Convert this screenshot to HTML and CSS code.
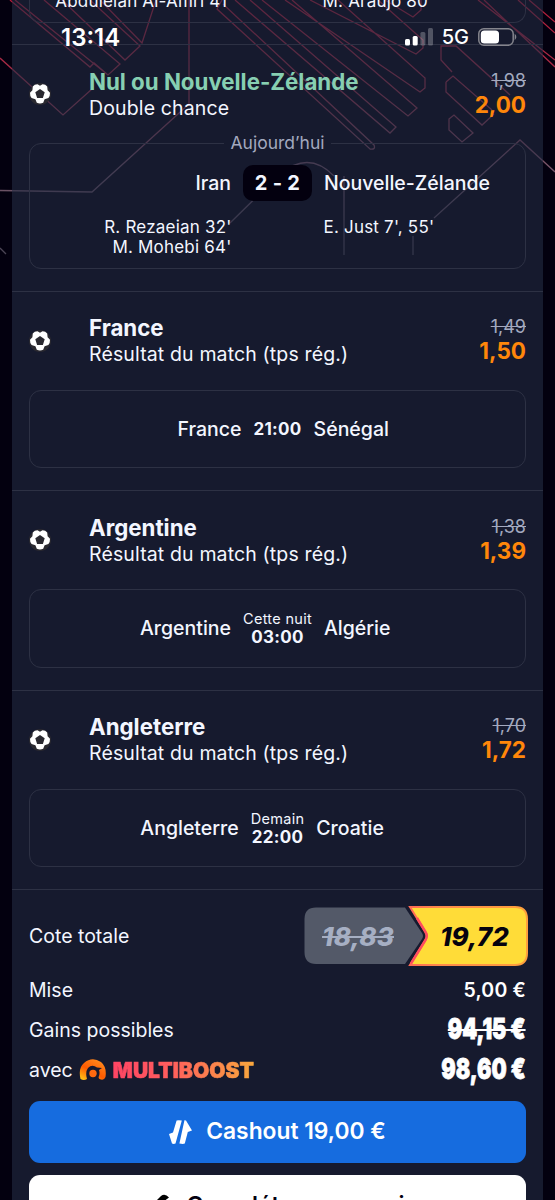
FILE: index.html
```html
<!DOCTYPE html>
<html lang="fr">
<head>
<meta charset="utf-8">
<title>Mes paris</title>
<link rel="stylesheet" href="styles.css">
</head>
<body>
<svg class="backdrop" width="555" height="300" viewBox="0 0 555 300">
  <defs>
    <linearGradient id="trace" gradientUnits="userSpaceOnUse" x1="0" y1="0" x2="0" y2="260">
      <stop offset="0" stop-color="#b51b38"/><stop offset=".35" stop-color="#a0304a"/><stop offset=".65" stop-color="#75566a"/><stop offset="1" stop-color="#484454"/>
    </linearGradient>
  </defs>
  <g fill="none" stroke="url(#trace)" stroke-width="1.300">
    <path d="M0 58 63 115 92 89M10 0 90 67 94 63 108 75 120 64 44 0M15 0 108 75M62 0 125 60 140 46 90 0M100 0 142 43 156 0M189 0V104L178 114 92 192 0 190.500M0 248 6 254"/>
    <path d="M222 0 217 9 370 149Q376 150 374 145L223 4M235 0 390 133 396 127 250 0M262 0 408 116 417 108 292 0M285 0 420 92 425 88V78L338 0M310 0 416 54 423 48V40L378 0M385 0 413 17 421 10V0"/>
    <path d="M510 95 456 46H441V60L452 72M446 82 453 76 492 110 M446 82V92L482 125 494 114M449 119 454 115 473 133 462 142 449 130ZM478 0 555 60M484 0 555 67M518 0 555 33M529 0 555 22M434 218 520 140 555 172M230 223 280 174Q309 150 334 176M344 176V255M413 236V255"/>
  </g>
</svg>
<svg width="0" height="0" class="sprite">
  <symbol id="ball" viewBox="0 0 22 22">
    <circle cx="11" cy="11" r="11" fill="#2a2930"/>
    <path fill="#fff" fill-rule="evenodd" d="M3.800 3.500Q5.500 1.300 8.500 1.200L11 2.800 13.500 1.200Q16.500 1.300 18.200 3.500L18.600 7.200 21 9.800Q21.200 13 19.400 15L15.600 16.200 14.200 19.800Q11 21.300 7.800 19.800L6.400 16.200 2.600 15Q.8 13 1 9.800L3.400 7.200ZM11 5.900 6.300 9.300 8.100 15H13.900L15.700 9.300Z"/>
  </symbol>
</svg>

<main class="slip">
  <div class="match match-cut">
    <div class="scorers"><p>Abdulelah Al-Amri 41'</p><p>M. Araujo 80'</p></div>
  </div>

  <section class="leg">
    <header class="pick">
      <svg class="ball"><use href="#ball"/></svg>
      <div class="names"><h2 class="won">Nul ou Nouvelle-Zélande</h2><p>Double chance</p></div>
      <div class="odds"><s>1,98</s><b>2,00</b></div>
    </header>
    <div class="match match-live">
      <span class="day"><span>Aujourd’hui</span></span>
      <div class="teams"><span class="home">Iran</span><b class="score">2 - 2</b><span>Nouvelle-Zélande</span></div>
      <div class="scorers"><p>R. Rezaeian 32'<br>M. Mohebi 64'</p><p>E. Just 7', 55'</p></div>
    </div>
  </section>

  <section class="leg">
    <header class="pick">
      <svg class="ball"><use href="#ball"/></svg>
      <div class="names"><h2>France</h2><p>Résultat du match (tps rég.)</p></div>
      <div class="odds"><s>1,49</s><b>1,50</b></div>
    </header>
    <div class="match teams upcoming"><span class="home">France</span><div class="when"><b>21:00</b></div><span>Sénégal</span></div>
  </section>

  <section class="leg">
    <header class="pick">
      <svg class="ball"><use href="#ball"/></svg>
      <div class="names"><h2>Argentine</h2><p>Résultat du match (tps rég.)</p></div>
      <div class="odds"><s>1,38</s><b>1,39</b></div>
    </header>
    <div class="match teams upcoming"><span class="home">Argentine</span><div class="when"><small>Cette nuit</small><b>03:00</b></div><span>Algérie</span></div>
  </section>

  <section class="leg">
    <header class="pick">
      <svg class="ball"><use href="#ball"/></svg>
      <div class="names"><h2>Angleterre</h2><p>Résultat du match (tps rég.)</p></div>
      <div class="odds"><s>1,70</s><b>1,72</b></div>
    </header>
    <div class="match teams upcoming"><span class="home">Angleterre</span><div class="when"><small>Demain</small><b>22:00</b></div><span>Croatie</span></div>
  </section>

  <section class="totals">
    <div class="row row-odds">
      <span>Cote totale</span>
      <div class="boost">
        <svg class="boost-shape" width="224" height="60" viewBox="0 0 224 60">
          <defs><linearGradient id="edge" x1="0" x2="1"><stop offset="0" stop-color="#ff6a55"/><stop offset=".25" stop-color="#ff8a4a"/><stop offset="1" stop-color="#ffa03c"/></linearGradient></defs>
          <path fill="#535968" d="M12 1.500H101L118 27Q120 30 118 33L101 58H12Q.5 58 .5 46V13Q.5 1.500 12 1.500Z"/>
          <path fill="#ffdc38" stroke="url(#edge)" stroke-width="2" d="M106 1H211Q223 1 223 13V47Q223 59 211 59H106L121.500 34Q124 30 121.500 26Z"/>
          <path fill="none" stroke="#ff4d5e" stroke-width="2.500" d="M113 12 121.500 26Q124 30 121.500 34L107 57.500"/>
        </svg>
        <s>18,83</s><b>19,72</b>
      </div>
    </div>
    <div class="row"><span>Mise</span><span class="stake">5,00 €</span></div>
    <div class="row"><span>Gains possibles</span><s class="gain">94,15 €</s></div>
    <div class="row"><span class="with">avec
      <svg class="boost-logo" width="28" height="22" viewBox="0 0 28 22">
        <defs><linearGradient id="flame" x1="0" y1="1" x2=".7" y2="0"><stop offset="0" stop-color="#ffd21a"/><stop offset=".5" stop-color="#ff5a00"/><stop offset="1" stop-color="#ff8a1c"/></linearGradient></defs>
        <path fill="url(#flame)" d="M1.500 20Q-1 9 5 4 13-3 22 3 28 8 26.500 18 25 22 20.500 20 19 19 20 17 21 14 20 11L23 9 18 8.500Q13 5 9 9 6 13 8 20 5 22 1.500 20Z"/>
        <circle cx="14" cy="14.500" r="3.700" fill="#ff6a10"/>
      </svg><strong class="brand">MULTIBOOST</strong></span><b class="gain">98,60 €</b></div>
  </section>

  <div class="actions">
    <button class="btn btn-primary">
      <svg width="23" height="24" viewBox="0 0 23 24" fill="#fff"><path d="M7.600.5Q8.500 0 12.800.4L6.500 23.600Q4.500 24.300 3 23.500L0 14 4 12.500Z"/><path d="M15.400.5Q14.600 0 17 .4L23 10.500 18.800 12 15.800 23.500Q14.500 24.300 10.400 23.600Z"/></svg>
      Cashout 19,00 €
    </button>
    <button class="btn btn-light">
      <svg width="22" height="24" viewBox="0 0 22 24"><path d="M4 8 10 2Q14-1 18 3.500L14 6.500 10 24H4Z"/></svg>
      Compléter mon pari
    </button>
  </div>
</main>

<div class="status">
  <span class="clock">13:14</span>
  <div class="signals">
    <svg class="bars" width="29" height="18" viewBox="0 0 29 18" fill="#fff"><rect x="0" y="11" width="5" height="6.500" rx="1.500"/><rect x="7.700" y="8" width="5" height="9.500" rx="1.500"/><g opacity=".25"><rect x="15.400" y="4" width="5" height="13.500" rx="1.500"/><rect x="23" y="0" width="5" height="17.500" rx="1.500"/></g></svg>
    <span class="net">5G</span>
    <svg width="39" height="18" viewBox="0 0 39 18"><rect x=".8" y=".8" width="34.400" height="16.400" rx="5" fill="none" stroke="#85858d" stroke-width="1.500"/><rect x="2.800" y="2.500" width="18.200" height="13" rx="3.500" fill="#fff"/><path fill="#85858d" d="M36.700 5.800Q40 9 36.700 12.200Z"/></svg>
  </div>
</div>
</body>
</html>
```

FILE: styles.css
```css
* { box-sizing: border-box; }
html { background: #03000f; }
body {
  position: relative; margin: 0; height: 1200px; overflow: hidden;
  font-family: Inter, "Liberation Sans", sans-serif; font-size: 19.500px; font-weight: 500;
  color: #f3f6ff;
}
h2, p { margin: 0; }
.sprite { position: absolute; }
.backdrop { position: absolute; left: 0; top: 0; }

.slip { position: relative; display: flow-root; margin: 0 12px; height: 1200px; background: rgba(35, 43, 67, .6); }

.match { border: 1.500px solid #2d3144; border-radius: 12px; }
.match-cut { display: flow-root; height: 23px; margin: 0 17px; border-top: 0; border-radius: 0 0 12px 12px; }
.match-cut .scorers { margin-top: -9px; column-gap: 90px; }

.leg { padding: 23.500px 17px 22px; border-bottom: 1px solid #2d3144; }
.match-cut + .leg { margin-top: 21px; border-top: 1px solid #2d3144; }

.pick { display: flex; height: 52px; margin-bottom: 22.500px; }
.ball { width: 22px; height: 22px; margin: 14.500px 38px 0 0; }
.names { flex: 1; line-height: 26px; white-space: nowrap; font-size: 19.500px; font-weight: 440; letter-spacing: .14px; }
.names h2 { font-size: 22.300px; font-weight: 680; line-height: 26px; letter-spacing: 0; }
.names .won { letter-spacing: -.02px; color: #87cfb2; }
.odds { display: flex; flex-direction: column; align-items: flex-end; line-height: 24px; }
.odds s { font-size: 18px; font-weight: 400; color: #a3a9bf; }
.odds b { font-size: 22.500px; font-weight: 660; color: #ff870a; }

.match-live { position: relative; height: 125.500px; padding-top: 21px; }
.day { position: absolute; top: -14px; left: 0; right: 0; text-align: center; line-height: 26px; font-size: 17.500px; font-weight: 430; color: #a3a9bf; }
.day span { padding: 0 6px; background: #161a2e; }
.teams, .scorers { display: grid; grid-template-columns: 1fr auto 1fr; column-gap: 12px; align-items: center; }
.home { text-align: right; }
.score { width: 69px; height: 36px; border-radius: 10px; background: #03000f; text-align: center; line-height: 36px; font-size: 20px; font-weight: 700; letter-spacing: .3px; }
.scorers { grid-template-columns: 1fr 1fr; column-gap: 92px; align-items: start; margin-top: 16px; font-size: 17px; font-weight: 420; line-height: 20px; letter-spacing: .2px; }
.scorers p:first-child { text-align: right; }

.upcoming { height: 78.500px; }
.when { display: flex; flex-direction: column; align-items: center; line-height: 18px; }
.when small { font-size: 14.500px; font-weight: 400; letter-spacing: .3px; }
.when b { font-size: 17px; font-weight: 650; letter-spacing: .3px; }

.totals { padding: 16px 17px 0; }
.row { display: flex; height: 40px; align-items: center; justify-content: space-between; font-size: 19.500px; font-weight: 440; white-space: nowrap; }
.row-odds { height: 64px; padding-bottom: 4px; }
.boost { position: relative; display: flex; width: 224px; height: 60px; align-items: center; margin-right: -2px; font-size: 26px; font-style: italic; }
.boost-shape { position: absolute; left: 0; top: 0; }
.boost s, .boost b { position: relative; font-weight: 800; text-align: center; letter-spacing: .2px; }
.boost s { width: 108px; color: #a6afc3; }
.boost b { width: 116px; padding-left: 9px; color: #05030f; }
.stake { font-weight: 600; color: #fff; letter-spacing: .2px; }
.gain { font-size: 29px; line-height: 40px; font-weight: 900; color: #fff; -webkit-text-stroke: .8px #fff; transform: translateY(-1px) scaleX(.737); transform-origin: right; }
.gain:is(s) { text-decoration-thickness: 2px; }
.with { display: flex; align-items: center; }
.boost-logo { margin: 0 6px 0 6px; }
.brand { font-size: 21px; font-weight: 900; letter-spacing: .05px; color: transparent; -webkit-text-stroke: .6px transparent; background: linear-gradient(90deg, #ff4564, #ff5d5d 40%, #f9a73d); -webkit-background-clip: text; background-clip: text; }

.actions { display: flex; flex-direction: column; gap: 12px; padding: 10.500px 17px 0; }
.btn { display: flex; align-items: center; justify-content: center; gap: 14px; height: 62px; border: 0; border-radius: 11px; font: 600 22.800px/1 Inter, "Liberation Sans", sans-serif; white-space: nowrap; flex: none; }
.btn-primary { background: #166cdf; color: #fff; }
.btn-light { background: #fff; color: #03000f; }

.status { position: absolute; left: 61px; right: 38px; top: 22px; height: 30px; display: flex; align-items: center; justify-content: space-between; color: #fff; }
.clock { font-size: 24px; font-weight: 600; }
.signals { display: flex; align-items: center; gap: 9px; }
.bars { margin-right: -1px; }
.net { font-size: 20px; font-weight: 500; }
```
